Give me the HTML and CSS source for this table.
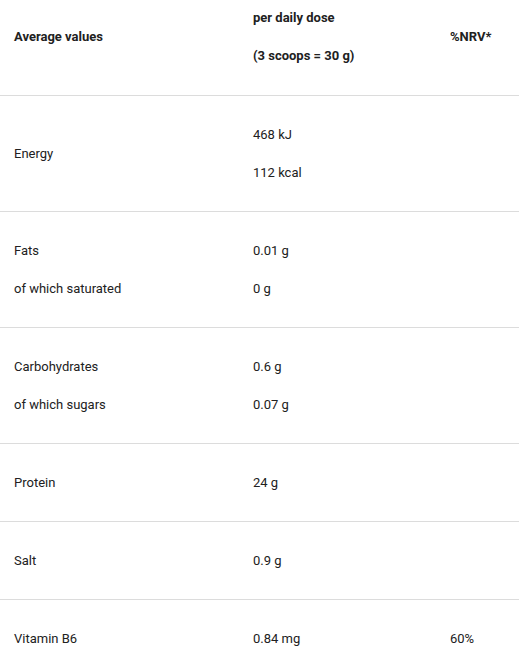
FILE: index.html
```html
<!DOCTYPE html>
<html>
<head>
<meta charset="utf-8">
<link rel="stylesheet" href="styles.css">
</head>
<body>
<table class="nutri">
  <colgroup>
    <col class="c1"><col class="c2"><col class="c3">
  </colgroup>
  <thead>
    <tr>
      <th><p>Average values</p></th>
      <th><p>per daily dose</p><p>(3 scoops = 30 g)</p></th>
      <th><p>%NRV*</p></th>
    </tr>
  </thead>
  <tbody>
    <tr>
      <td><p>Energy</p></td>
      <td><p>468 kJ</p><p>112 kcal</p></td>
      <td></td>
    </tr>
    <tr>
      <td><p>Fats</p><p>of which saturated</p></td>
      <td><p>0.01 g</p><p>0 g</p></td>
      <td></td>
    </tr>
    <tr>
      <td><p>Carbohydrates</p><p>of which sugars</p></td>
      <td><p>0.6 g</p><p>0.07 g</p></td>
      <td></td>
    </tr>
    <tr>
      <td><p>Protein</p></td>
      <td><p>24 g</p></td>
      <td></td>
    </tr>
    <tr>
      <td><p>Salt</p></td>
      <td><p>0.9 g</p></td>
      <td></td>
    </tr>
    <tr>
      <td><p>Vitamin B6</p></td>
      <td><p>0.84 mg</p></td>
      <td><p>60%</p></td>
    </tr>
  </tbody>
</table>
</body>
</html>
```
FILE: styles.css
```css
html, body {
  margin: 0;
  padding: 0;
  background: #fff;
}
body {
  font-family: Roboto, "Liberation Sans", Arial, sans-serif;
  font-size: 13px;
  color: #212121;
}
.nutri {
  width: 519px;
  border-collapse: collapse;
  table-layout: fixed;
}
.c1 { width: 239px; }
.c2 { width: 197px; }
.c3 { width: 83px; }
.nutri th,
.nutri td {
  text-align: left;
  vertical-align: middle;
  padding: 10px 0 10px 14px;
  border-bottom: 1px solid #dcdcdc;
  line-height: 19px;
}
.nutri th {
  font-weight: 700;
  padding-top: 0;
  padding-bottom: 11px;
}
.nutri p {
  margin: 19px 0;
}
.nutri th p:first-child {
  margin-top: 8px;
}
.nutri tbody tr:last-child td {
  border-bottom: none;
}
```
